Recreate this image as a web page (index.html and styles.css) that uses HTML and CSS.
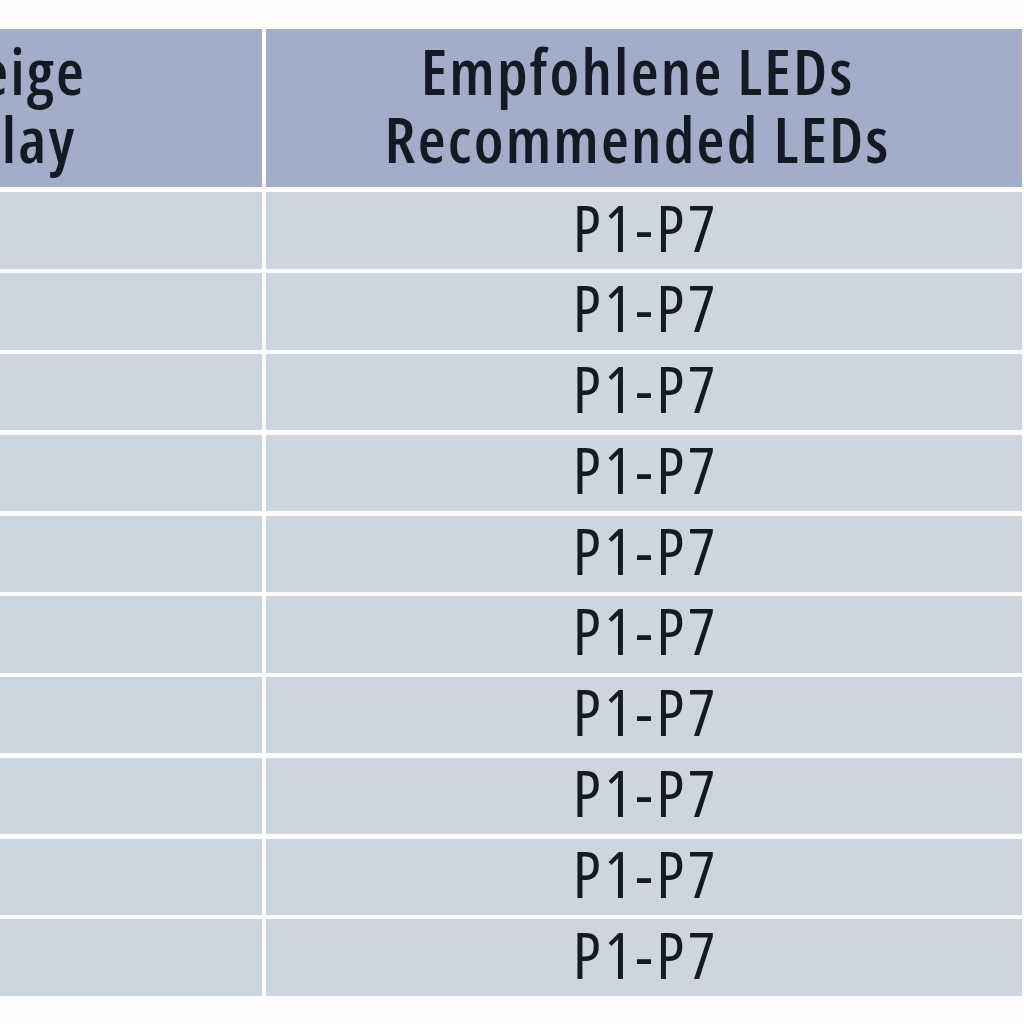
FILE: index.html
```html
<!DOCTYPE html>
<html lang="de">
<head>
<meta charset="utf-8">
<title>Empfohlene LEDs</title>
<link rel="stylesheet" href="styles.css">
</head>
<body>
<div class="table">
  <div class="cell head left"><span class="clip">Anzeige<br>Display</span></div>
  <div class="cell head right">Empfohlene LEDs<br>Recommended LEDs</div>
  <div class="cell left"></div><div class="cell right">P1-P7</div>
  <div class="cell left"></div><div class="cell right">P1-P7</div>
  <div class="cell left"></div><div class="cell right">P1-P7</div>
  <div class="cell left"></div><div class="cell right">P1-P7</div>
  <div class="cell left"></div><div class="cell right">P1-P7</div>
  <div class="cell left"></div><div class="cell right">P1-P7</div>
  <div class="cell left"></div><div class="cell right">P1-P7</div>
  <div class="cell left"></div><div class="cell right">P1-P7</div>
  <div class="cell left"></div><div class="cell right">P1-P7</div>
  <div class="cell left"></div><div class="cell right">P1-P7</div>
</div>
</body>
</html>
```
FILE: styles.css
```css
html, body {
  margin: 0;
  padding: 0;
  background: #fdfcfe;
}
body {
  width: 1024px;
  height: 1024px;
  overflow: hidden;
  font-family: "Open Sans", "Noto Sans", sans-serif;
  color: #121a26;
}
.table {
  margin-top: 29px;
  width: 1022px;
  display: grid;
  grid-template-columns: 262px 756px;
  grid-template-rows: 159px repeat(10, 76.4px);
  column-gap: 4px;
  row-gap: 4.4px;
}
.cell {
  background: #ced5e1;
  display: flex;
  align-items: center;
  justify-content: center;
  font-size: 64px;
  font-stretch: 87.5%;
  letter-spacing: 3.6px;
  text-indent: 3.6px;
  line-height: 68px;
  padding-bottom: 6px;
  box-sizing: border-box;
}
.cell.left {
  background: #cbd5e0;
  justify-content: flex-start;
  overflow: hidden;
}
.head {
  background: #a2aec7;
  font-weight: 600;
  letter-spacing: 2.2px;
  text-indent: 0;
  text-align: center;
  padding-bottom: 6px;
  padding-right: 13px;
  margin-bottom: 0.6px;
}
.head.left {
  background: #a2aec7;
  padding-right: 0;
}
.clip {
  text-align: left;
  margin-left: -109px;
  white-space: nowrap;
}
```
